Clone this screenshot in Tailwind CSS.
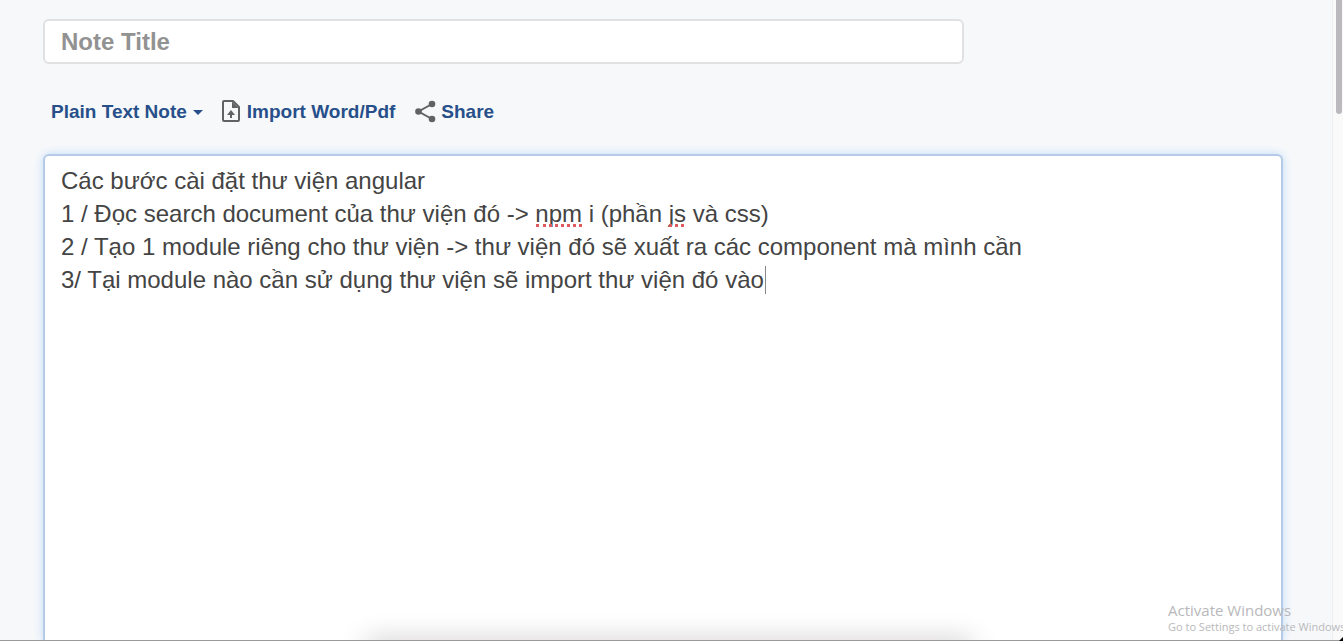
<!DOCTYPE html>
<html lang="vi">
<head>
<meta charset="utf-8">
<meta name="viewport" content="width=device-width, initial-scale=1">
<title>Note editor</title>
<script src="https://cdn.jsdelivr.net/npm/@tailwindcss/browser@4"></script>
</head>
<body class="relative flex h-screen overflow-hidden bg-[#f7f8fa] font-['Liberation_Sans',Arial,sans-serif] text-[#444]">
  <main class="flex min-w-0 flex-1 flex-col pt-[19px] pr-[49px] pl-[43px]">
    <input type="text" aria-label="Note Title" placeholder="Note Title" class="h-[45px] w-[921px] max-w-full shrink-0 rounded-md border-2 border-[#e1e1e4] bg-white px-4 pt-px text-2xl font-bold placeholder:text-[#929292] focus:outline-none">

    <nav aria-label="Note actions" class="flex h-[90px] shrink-0 items-center pt-[6px] pl-2 text-[19px] font-bold text-[#27508a]">
      <button type="button" class="flex items-center gap-[6px] whitespace-nowrap">Plain Text Note
        <svg class="h-[5px] w-[10px]" viewBox="0 0 10 5" fill="currentColor" aria-hidden="true"><path d="M0 0h10L5 5z"/></svg>
      </button>
      <button type="button" class="ml-4 flex items-center gap-1 whitespace-nowrap">
        <svg class="size-6" viewBox="0 0 24 24" fill="none" stroke="#626262" stroke-width="2" stroke-linejoin="round" aria-hidden="true"><path d="M5 1h9l6 6v13a1 1 0 0 1-1 1H5a1 1 0 0 1-1-1V2a1 1 0 0 1 1-1z"/><path d="M13 1.500V8h6.500z" fill="#626262" stroke="none"/><path d="M12 18v-5"/><path d="M8 15l4-5 4 5z" fill="#626262" stroke="none"/></svg>
        Import Word/Pdf
      </button>
      <button type="button" class="ml-5 flex items-center gap-1 whitespace-nowrap">
        <svg class="h-6 w-[22px]" viewBox="0 0 22 24" fill="#626262" aria-hidden="true"><path d="M17 4L3.500 11.500 17 19" fill="none" stroke="#626262" stroke-width="2"/><circle cx="17" cy="4" r="3.300"/><circle cx="3.500" cy="11.500" r="3.300"/><circle cx="17" cy="19" r="3.300"/></svg>
        Share
      </button>
    </nav>

    <div class="relative flex min-h-0 flex-1">
      <textarea aria-label="Note content" spellcheck="false" class="block w-full resize-none rounded-t-md border-2 border-b-0 border-[#b5cae6] bg-white px-4 py-2 text-2xl leading-[33px] text-[#444] shadow-[0_0_10px_#bfdcf8] outline-none">Các bước cài đặt thư viện angular
1 / Đọc search document của thư viện đó -&gt; npm i (phần js và css)
2 / Tạo 1 module riêng cho thư viện -&gt; thư viện đó sẽ xuất ra các component mà mình cần
3/ Tại module nào cần sử dụng thư viện sẽ import thư viện đó vào</textarea>
      <span class="pointer-events-none absolute top-[70px] left-[493px] w-[46px] border-b-3 border-dotted border-[#df5a5f]"></span>
      <span class="pointer-events-none absolute top-[70px] left-[626px] w-[15px] border-b-3 border-dotted border-[#df5a5f]"></span>
      <span class="pointer-events-none absolute top-[112px] left-[722px] h-7 w-px bg-[#888]"></span>
    </div>
  </main>

  <div class="w-[11px] shrink-0 border-l border-[#eeeff1] bg-[#fafafb] pr-px pl-[2px]" aria-hidden="true">
    <div class="ml-auto h-[114px] w-[6px] rounded-b-full bg-[#bbb9bd]"></div>
  </div>

  <div class="pointer-events-none absolute inset-x-0 bottom-0 h-10 overflow-hidden" aria-hidden="true">
    <div class="absolute top-full left-[365px] h-4 w-[608px] rounded-xl shadow-[0_0_28px_#c4c0c0]"></div>
    <div class="absolute inset-x-0 bottom-0 h-px bg-[#9b9b9f]"></div>
  </div>

  <aside class="pointer-events-none absolute bottom-[6px] left-[1168px] whitespace-nowrap font-['Open_Sans','Noto_Sans',sans-serif] text-[#b8b8bb]">
    <p class="text-[15px] leading-[18px]">Activate Windows</p>
    <p class="text-[11px] leading-4">Go to Settings to activate Windows</p>
  </aside>
  <svg class="absolute right-0 bottom-0 size-1" viewBox="0 0 4 4" aria-hidden="true"><path d="M4 0v4H0z"/></svg>
</body>
</html>
